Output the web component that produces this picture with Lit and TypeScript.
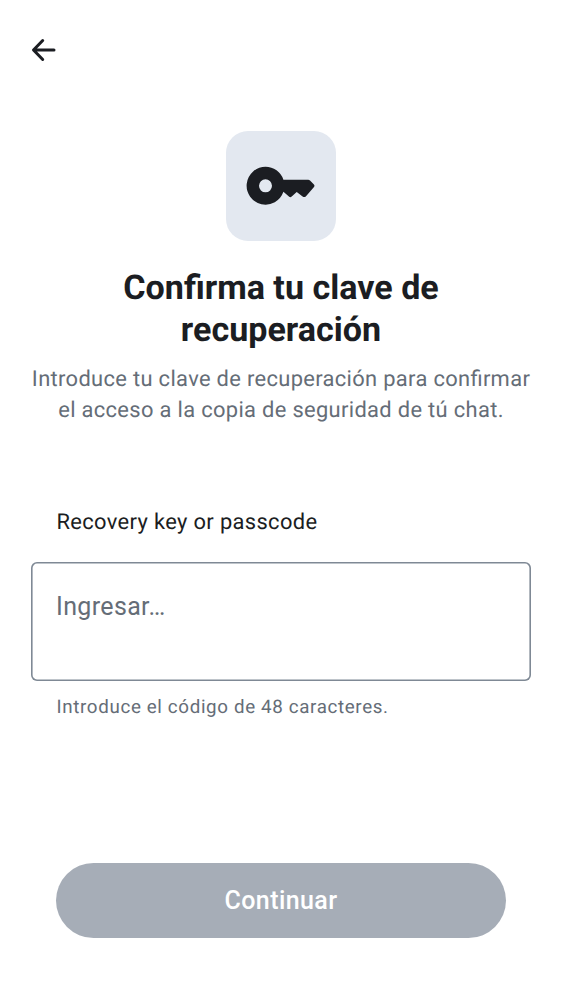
import { LitElement, html, css } from "lit";
import { customElement } from "lit/decorators.js";

@customElement("app-root")
export class AppRoot extends LitElement {
  static styles = css`
    :host { display: flex; flex-direction: column; box-sizing: border-box; height: 1000px; background: #fff; color: #1b1d22; font-family: Roboto, sans-serif; padding: 0 31px 62.5px; text-rendering: geometricPrecision; }
    .bar { height: 100px; flex: none; display: flex; align-items: center; }
    .back { border: 0; background: none; padding: 0; display: block; color: inherit; line-height: 0; }
    .tile { width: 110px; height: 110px; margin: 31px auto 0; border-radius: 22px; background: #e3e8f0; display: flex; align-items: center; justify-content: center; }
    h1 { margin: 26px 0 0; font-size: 34.1px; line-height: 42px; font-weight: 700; text-align: center; }
    .lead { margin: 13px -10px 0; font-size: 21.9px; line-height: 31px; letter-spacing: 0.33px; font-feature-settings: "liga" 1; color: #656d77; text-align: center; }
    .label { margin: 81px 25.5px 0; font-size: 21.9px; line-height: 31px; letter-spacing: 0.35px; }
    .field { display: block; box-sizing: border-box; width: 500px; height: 119px; margin: 24px 0 0; padding: 28.5px 25px; border: 0; box-shadow: inset 0 0 0 1.6px #7f8995; border-radius: 6px; resize: none; font: 25px/32px Roboto, sans-serif; letter-spacing: 0.35px; outline: 0; }
    .field::placeholder { color: #656d77; opacity: 1; }
    .hint { margin: 13px 25.5px 0; font-size: 18.75px; line-height: 26px; letter-spacing: 0.65px; color: #656d77; }
    .cta { margin: auto 25px 0; height: 75px; flex: none; border: 0; border-radius: 38px; padding: 1px 0 0; background: #a6adb7; color: #fff; font: 500 25px/32px Roboto, sans-serif; letter-spacing: 0.4px; }
  `;

  render() {
    return html`
      <header class="bar">
        <button class="back" aria-label="Atrás">
          <svg width="26" height="26" viewBox="0 0 26 26" fill="none" stroke="currentColor" stroke-width="3" stroke-linecap="round" stroke-linejoin="round"><path d="M23 13H3M11.700 3.500L2.500 13l9.200 9.500" /></svg>
        </button>
      </header>
      <div class="tile">
        <svg width="70" height="40" viewBox="0 0 70 40" fill="#1b1d22"><path fill-rule="evenodd" d="M19.500 .8A18.900 18.900 0 0 1 37.400 13.700H62.200Q63.200 13.700 64 14.400L67.700 18.200Q69.200 19.700 67.800 21.300L60 30.200Q58.300 31.900 56.600 30.400L50.700 26 45.700 30.600Q44.300 31.800 42.900 30.600L37.400 25.800A18.900 18.900 0 1 1 19.500 .8zM19.500 13.300a6.500 6.500 0 1 0 0 13 6.500 6.500 0 0 0 0-13z" /></svg>
      </div>
      <h1>Confirma tu clave de<br />recuperación</h1>
      <p class="lead">Introduce tu clave de recuperación para confirmar<br />el acceso a la copia de seguridad de tú chat.</p>
      <label class="label" for="key">Recovery key or passcode</label>
      <textarea class="field" id="key" placeholder="Ingresar…"></textarea>
      <div class="hint">Introduce el código de 48 caracteres.</div>
      <button class="cta">Continuar</button>
    `;
  }
}
